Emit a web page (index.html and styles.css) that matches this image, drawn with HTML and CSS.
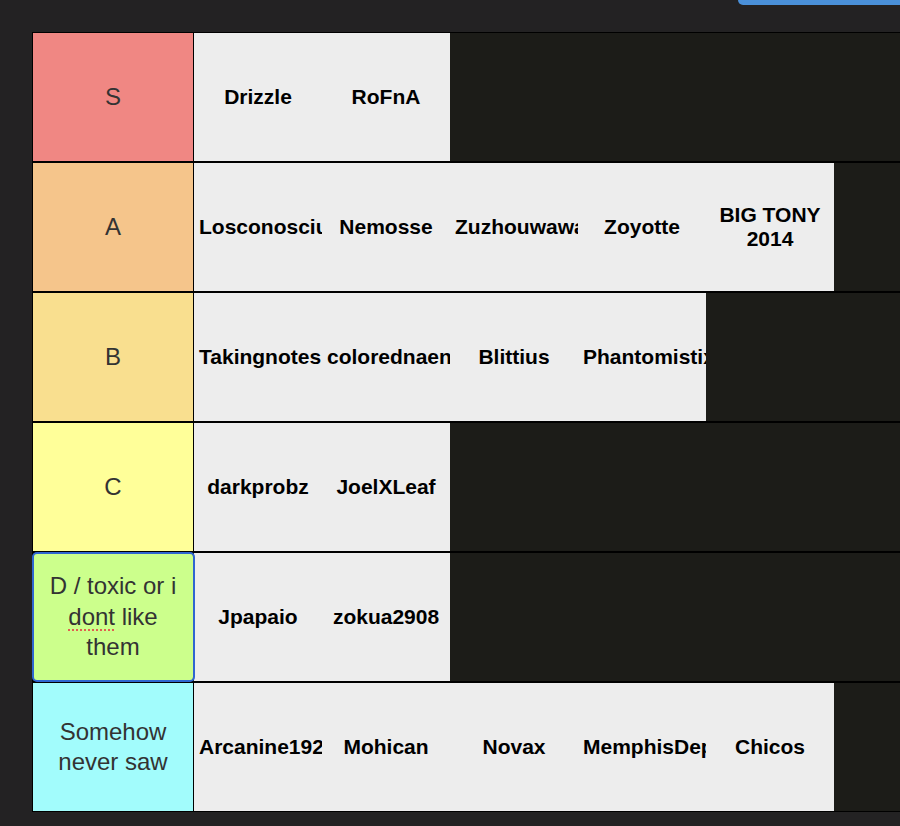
FILE: index.html
```html
<!DOCTYPE html>
<html>
<head>
<meta charset="utf-8">
<link rel="stylesheet" href="styles.css">
</head>
<body>
<div class="topbtn"></div>
<div class="board">
  <div class="tier">
    <div class="label s"><div class="txt">S</div></div>
    <div class="items">
      <div class="item"><div class="name">Drizzle</div></div>
      <div class="item"><div class="name">RoFnA</div></div>
    </div>
  </div>
  <div class="tier">
    <div class="label a"><div class="txt">A</div></div>
    <div class="items">
      <div class="item"><div class="name">Losconosciuto</div></div>
      <div class="item"><div class="name">Nemosse</div></div>
      <div class="item"><div class="name">Zuzhouwawa</div></div>
      <div class="item"><div class="name">Zoyotte</div></div>
      <div class="item"><div class="name">BIG TONY 2014</div></div>
    </div>
  </div>
  <div class="tier">
    <div class="label b"><div class="txt">B</div></div>
    <div class="items">
      <div class="item"><div class="name">Takingnotes</div></div>
      <div class="item"><div class="name">colorednaenae</div></div>
      <div class="item"><div class="name">Blittius</div></div>
      <div class="item"><div class="name">Phantomistix</div></div>
    </div>
  </div>
  <div class="tier">
    <div class="label c"><div class="txt">C</div></div>
    <div class="items">
      <div class="item"><div class="name">darkprobz</div></div>
      <div class="item"><div class="name">JoelXLeaf</div></div>
    </div>
  </div>
  <div class="tier">
    <div class="label d focused"><div class="txt">D / toxic or i <span class="typo">dont</span> like them</div></div>
    <div class="items">
      <div class="item"><div class="name">Jpapaio</div></div>
      <div class="item"><div class="name">zokua2908</div></div>
    </div>
  </div>
  <div class="tier">
    <div class="label f"><div class="txt">Somehow never saw</div></div>
    <div class="items">
      <div class="item"><div class="name">Arcanine1922</div></div>
      <div class="item"><div class="name">Mohican</div></div>
      <div class="item"><div class="name">Novax</div></div>
      <div class="item"><div class="name">MemphisDepay</div></div>
      <div class="item"><div class="name">Chicos</div></div>
    </div>
  </div>
</div>
</body>
</html>
```
FILE: styles.css
```css
html, body {
  margin: 0;
  padding: 0;
  background: #232223;
  overflow: hidden;
  height: 826px;
}
body {
  position: relative;
  font-family: "Liberation Sans", Arial, sans-serif;
}
.topbtn {
  position: absolute;
  top: 0;
  right: 0;
  width: 162px;
  height: 5px;
  background: #4a90d9;
  border-bottom-left-radius: 6px;
}
.board {
  padding: 32px 0 0 32px;
  width: 1000px;
}
.tier {
  display: flex;
  border: 1px solid #000;
  background: #1c1c18;
}
.label {
  box-sizing: border-box;
  width: 161px;
  height: 128px;
  flex: none;
  border-right: 1px solid #000;
  display: flex;
  align-items: center;
  justify-content: center;
  text-align: center;
  font-size: 24px;
  line-height: 30.5px;
  color: #333;
  padding: 0 8px;
}
.txt {
  width: 100%;
}
.s { background: #f08783; }
.a { background: #f5c58b; }
.b { background: #f9df8f; }
.c { background: #ffff99; }
.d { background: #ccff8c; }
.f { background: #a2fcfc; }
.focused {
  position: relative;
  border-radius: 4px;
  outline: 2px solid #2f66d0;
  outline-offset: -1px;
  z-index: 1;
}
.typo {
  text-decoration: underline dotted #e0604f;
  text-decoration-thickness: 2px;
  text-underline-offset: 5px;
}
.items {
  display: flex;
}
.item {
  box-sizing: border-box;
  width: 128px;
  height: 128px;
  padding: 0 5px;
  background: #ededed;
  overflow: hidden;
  display: flex;
  align-items: center;
}
.name {
  width: 100%;
  text-align: center;
  font-size: 21px;
  font-weight: bold;
  line-height: 24px;
  color: #000;
}
```
